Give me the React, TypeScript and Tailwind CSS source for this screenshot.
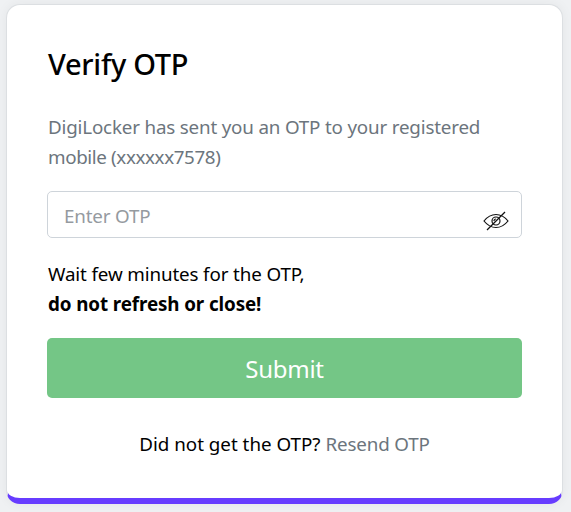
export default function App() {
  return (
    <main className="h-[512px] w-[571px] overflow-hidden bg-[#eff1f3] pt-[4px] pl-[6px] font-['Noto_Sans',sans-serif] text-black">
      <section className="flex h-[500px] w-[557px] flex-col rounded-[14px] border border-b-[6px] border-[#dcdfe2] border-b-[#673cff] bg-white px-[40px] pt-[39px] shadow-[0_0_12px_rgba(0,0,0,0.05)]">
        <h1 className="h-[42px] pl-px text-[29px] leading-[40px] font-medium tracking-[-0.28px] whitespace-nowrap">Verify OTP</h1>
        <p className="mt-[26px] pl-px text-[18.8px] leading-[30px] tracking-[-0.18px] whitespace-nowrap text-[#6c757d]">
          DigiLocker has sent you an OTP to your registered<br /><span className="tracking-[-0.37px]">mobile (xxxxxx7578)</span>
        </p>
        <div className="mt-[19px] flex h-[47px] shrink-0 items-center justify-between rounded-[5px] border border-[#ced4da] pr-[11px] pl-4">
          <input aria-label="Enter OTP" placeholder="Enter OTP" className="w-[300px] pt-[3px] text-[18.8px] tracking-[-0.18px] outline-none placeholder:text-[#959a9f]" />
          <svg width="28" height="24" viewBox="0 0 28 24" fill="none" stroke="#111" strokeWidth="1.2" className="mt-3">
            <path d="M2 12C6 7 10 5.5 14 5.5S22 7 26 12C22 17 18 18.5 14 18.5S6 17 2 12Z" /><circle cx="14" cy="12" r="4" /><path d="M12 12A2 2 0 0 1 14 10" /><path d="M5 21L23 3" />
          </svg>
        </div>
        <p className="mt-[21px] pl-px text-[18.8px] leading-[30px] tracking-[-0.13px] whitespace-nowrap">Wait few minutes for the OTP,<br /><strong className="font-bold tracking-[-0.1px]">do not refresh or close!</strong></p>
        <button className="mt-[19px] h-[60px] shrink-0 rounded-[5px] bg-[#74c686] pt-px text-[24px] tracking-[-0.25px] text-white">Submit</button>
        <p className="mt-[31px] text-center text-[18.8px] leading-[30px]">Did not get the OTP? <a className="tracking-[-0.14px] text-[#6c757d]">Resend OTP</a></p>
      </section>
    </main>
  );
}
